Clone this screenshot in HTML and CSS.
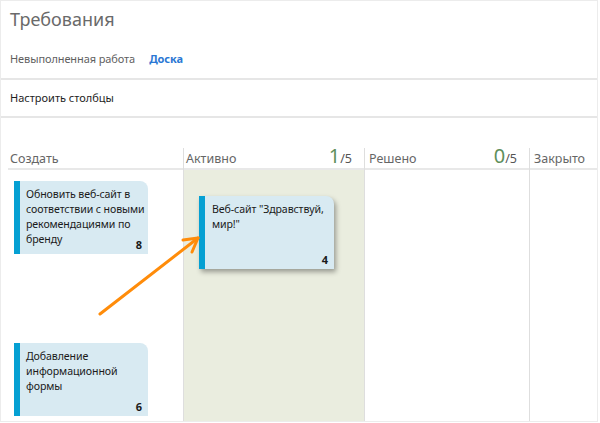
FILE: index.html
```html
<!DOCTYPE html>
<html lang="ru">
<head>
<meta charset="utf-8">
<title>Требования</title>
<link rel="stylesheet" href="styles.css">
</head>
<body>
<div class="page">
  <header class="head">
    <h1 class="title">Требования</h1>
    <nav class="tabs">
      <span class="tab">Невыполненная работа</span>
      <span class="tab tab-active">Доска</span>
    </nav>
  </header>
  <div class="toolbar">Настроить столбцы</div>
  <div class="board">
    <section class="col col-new">
      <div class="col-head"><span class="col-name">Создать</span></div>
      <div class="col-body">
        <div class="card card-first">
          <div class="card-text">Обновить веб-сайт в соответствии с новыми рекомендациями по бренду</div>
          <div class="card-num">8</div>
        </div>
        <div class="card card-second">
          <div class="card-text">Добавление информационной формы</div>
          <div class="card-num">6</div>
        </div>
      </div>
    </section>
    <section class="col col-active">
      <div class="col-head"><span class="col-name">Активно</span><span class="wip"><span class="wip-n">1</span>/5</span></div>
      <div class="col-body active-body">
        <div class="card card-drag">
          <div class="card-text">Веб-сайт "Здравствуй, мир!"</div>
          <div class="card-num">4</div>
        </div>
      </div>
    </section>
    <section class="col col-resolved">
      <div class="col-head"><span class="col-name">Решено</span><span class="wip"><span class="wip-n">0</span>/5</span></div>
      <div class="col-body"></div>
    </section>
    <section class="col col-closed">
      <div class="col-head"><span class="col-name">Закрыто</span></div>
      <div class="col-body"></div>
    </section>
  </div>
  <svg class="arrow" width="598" height="422" viewBox="0 0 598 422">
    <g fill="none" stroke="#ff8c0a" stroke-width="3" stroke-linecap="round" stroke-linejoin="round">
      <line x1="100" y1="314" x2="198" y2="238"/>
      <polyline points="183,240 198,238 192,252"/>
    </g>
  </svg>
</div>
</body>
</html>
```

FILE: styles.css
```css
* { box-sizing: border-box; }
html, body { margin: 0; padding: 0; background: #ffffff; }
body {
  font-family: "Noto Sans", "Open Sans", "Liberation Sans", sans-serif;
  color: #222;
}
.page {
  position: relative;
  width: 598px;
  height: 422px;
  border: 1px solid #ececec;
  display: flex;
  flex-direction: column;
  overflow: hidden;
}
.head {
  padding: 5px 0 11px 9px;
  border-bottom: 2px solid #e6e6e6;
}
.title {
  margin: 0;
  font-size: 18px;
  line-height: 26px;
  font-weight: 400;
  color: #6a6a6a;
}
.tabs {
  margin-top: 19px;
  display: flex;
  gap: 14px;
  font-size: 11px;
  line-height: 16px;
  letter-spacing: -0.1px;
}
.tab { color: #5f5f5f; }
.tab-active { color: #2b78d4; font-weight: 700; }
.toolbar {
  padding: 10px 0 10px 9px;
  font-size: 11px;
  line-height: 16px;
  color: #1e1e1e;
  border-bottom: 2px solid #e6e6e6;
}
.board {
  flex: 1;
  margin: 30px 0 0 7px;
  display: grid;
  grid-template-columns: 175px 181px 165px 1fr;
}
.col {
  display: flex;
  flex-direction: column;
}
.col + .col { border-left: 1px solid #dedede; }
.col-head {
  height: 22px;
  display: flex;
  align-items: flex-start;
  justify-content: space-between;
  padding: 0 12px 0 2px;
  border-bottom: 2px solid #e8e8e8;
}
.col-resolved .col-head, .col-closed .col-head { padding-left: 4px; }
.col-name {
  font-size: 12.5px;
  line-height: 21px;
  color: #666;
}
.wip {
  font-size: 12.5px;
  line-height: 21px;
  color: #555;
  display: flex;
  align-items: baseline;
}
.wip-n {
  font-size: 20px;
  color: #5f8f5c;
  line-height: 16px;
}
.col-body {
  flex: 1;
  display: flex;
  flex-direction: column;
  align-items: flex-start;
}
.active-body { background: #eaeddf; }
.card {
  width: 134px;
  height: 73px;
  background: #d8eaf2;
  border-left: 6px solid #05a0d3;
  border-top-right-radius: 8px;
  display: grid;
  font-size: 10.6px;
  line-height: 15px;
  letter-spacing: -0.1px;
  color: #1a1a1a;
}
.card-text, .card-num { grid-area: 1 / 1; }
.card-text { padding: 6px 0 0 6px; }
.card-num {
  align-self: end;
  justify-self: end;
  font-weight: 700;
  font-size: 11px;
  line-height: 13px;
  padding: 0 6px 3px 0;
}
.card-first { margin: 11px 0 0 6px; }
.card-second { margin: 89px 0 0 6px; }
.card-drag {
  width: 135px;
  margin: 26px 0 0 15px;
  box-shadow: 2px 3px 5px rgba(0, 0, 0, 0.35);
}
.card-drag .card-text { padding: 6px 0 0 7px; }
.arrow {
  position: absolute;
  top: -1px;
  left: -1px;
  pointer-events: none;
}
```
